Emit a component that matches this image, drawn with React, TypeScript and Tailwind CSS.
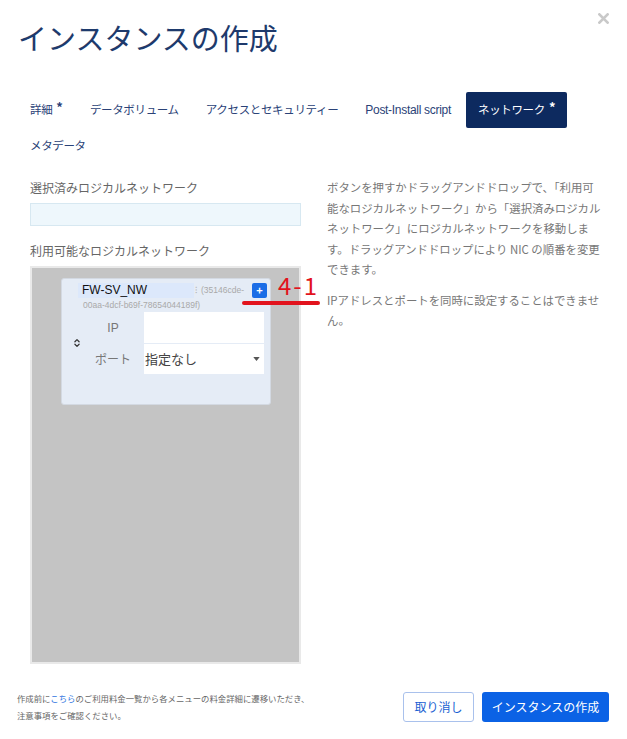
import { ChevronsUpDown } from "lucide-react";

const tabs = [
  { label: "詳細", req: true },
  { label: "データボリューム" },
  { label: "アクセスとセキュリティー" },
  { label: "Post-Install script" },
  { label: "ネットワーク", req: true, active: true },
  { label: "メタデータ" },
];

const help1 = [
  "ボタンを押すかドラッグアンドドロップで、「利用可",
  "能なロジカルネットワーク」から「選択済みロジカル",
  "ネットワーク」にロジカルネットワークを移動しま",
  "す。ドラッグアンドドロップにより NIC の順番を変更",
  "できます。",
];

const help2 = ["IPアドレスとポートを同時に設定することはできませ", "ん。"];

function NetworkCard() {
  return (
    <div className="ml-[29px] mt-[9px] w-[210px] h-[127px] rounded-[3px] border border-[#d3d9e2] bg-[#e5ecf6]">
      <div className="flex items-center h-[18px] mt-[2px]">
        <span className="ml-[16px] w-[116px] h-[15px] pl-[4px] flex items-center bg-[#dce8fb] text-[12px] text-[#111] font-['Liberation_Sans',sans-serif]">
          FW-SV_NW
        </span>
        <span className="ml-[1px] text-[9px] text-[#b0b0b0]">⁝</span>
        <span className="ml-[4px] text-[8.5px] text-[#a9a9a9] font-['Liberation_Sans',sans-serif]">(35146cde-</span>
        <button className="ml-auto mr-[3px] w-[15px] h-[15px] rounded-[2px] bg-[#1b6de6] text-white text-[11px] leading-none flex items-center justify-center font-bold">
          +
        </button>
      </div>
      <div className="ml-[21px] h-[13px] leading-[13px] text-[8.5px] text-[#a9a9a9] font-['Liberation_Sans',sans-serif]">
        00aa-4dcf-b69f-78654044189f)
      </div>
      <div className="flex items-center">
        <div className="w-[29px] flex justify-center pl-[1px]">
          <ChevronsUpDown className="w-[10px] h-[10px] text-[#333]" strokeWidth={3} />
        </div>
        <div className="flex flex-col gap-[1px]">
          <div className="flex items-center">
            <span className="w-[44px] text-center text-[12px] text-[#777] font-['Liberation_Sans',sans-serif]">IP</span>
            <div className="ml-[9px] w-[120px] h-[31px] bg-white" />
          </div>
          <div className="flex items-center">
            <span className="w-[44px] text-center text-[12px] text-[#777]">ポート</span>
            <div className="ml-[9px] w-[120px] h-[30px] bg-white flex items-center justify-between pl-[1px] pr-[4px]">
              <span className="text-[13px] text-[#444]">指定なし</span>
              <svg viewBox="0 0 8 5" className="w-[7px] h-[4px]">
                <path d="M0 0 L8 0 L4 5 Z" fill="#555" />
              </svg>
            </div>
          </div>
        </div>
      </div>
    </div>
  );
}

export default function App() {
  return (
    <div className="w-[627px] h-[739px] bg-white px-[18px] font-['Noto_Sans_CJK_JP',sans-serif] relative">
      <div className="flex items-start justify-between pt-[16px]">
        <h1 className="text-[29px] leading-[42px] text-[#1e3a6c] font-normal">インスタンスの作成</h1>
        <button className="mt-[-3px] w-[11px] h-[11px]">
          <svg viewBox="0 0 12 12" className="w-[11px] h-[11px]">
            <path d="M1.5 1.5 L10.5 10.5 M10.5 1.5 L1.5 10.5" stroke="#c9c9c9" strokeWidth="3" strokeLinecap="round" />
          </svg>
        </button>
      </div>

      <div className="flex flex-wrap gap-x-[3px] mt-[34px]">
        {tabs.map((t) => (
          <div
            key={t.label}
            className={
              t.active
                ? "h-[36px] px-3 flex items-center rounded-[2px] bg-[#0d2a5f] text-white text-[11.5px]"
                : "h-[36px] px-3 flex items-center text-[#2a4277] text-[11.5px]"
            }
          >
            <span className={t.label === "Post-Install script" ? "font-['Liberation_Sans',sans-serif] text-[12px] tracking-[-0.3px]" : "tracking-[-0.35px]"}>
              {t.label}
            </span>
            {t.req && <span className="ml-[4px] mt-[-8px] text-[13px] font-bold leading-none">*</span>}
          </div>
        ))}
      </div>

      <div className="flex px-3 mt-[14px]">
        <div className="w-[271px] shrink-0">
          <div className="h-[20px] leading-[20px] text-[12px] text-[#666]">選択済みロジカルネットワーク</div>
          <div className="mt-[5px] h-[23px] bg-[#eef7fc] border border-[#d7e8f1]" />
          <div className="mt-[15px] h-[20px] leading-[20px] text-[12px] text-[#666]">利用可能なロジカルネットワーク</div>
          <div className="mt-[5px] h-[398px] border-2 border-[#e9e9e9] bg-[#c4c4c4] pt-[1px]">
            <NetworkCard />
          </div>
        </div>

        <div className="ml-[26px] mt-[-1px] text-[11.4px] leading-[20.5px] text-[#777]">
          <p className="mb-[10px]">
            {help1.map((l) => (
              <span key={l} className="block whitespace-nowrap">{l}</span>
            ))}
          </p>
          <p>
            {help2.map((l) => (
              <span key={l} className="block whitespace-nowrap">{l}</span>
            ))}
          </p>
        </div>
      </div>

      <div className="flex items-center justify-between mt-[26px]">
        <div className="ml-[-1px] text-[8.4px] leading-[17px] text-[#666]">
          <div>
            作成前に<span className="text-[#2f74e0]">こちら</span>のご利用料金一覧から各メニューの料金詳細に遷移いただき、
          </div>
          <div>注意事項をご確認ください。</div>
        </div>
        <div className="flex gap-[8px]">
          <button className="w-[71px] h-[30px] rounded-[3px] border border-[#a9c1ec] text-[#1b5fd2] text-[12px]">取り消し</button>
          <button className="w-[127px] h-[30px] rounded-[3px] bg-[#0b62e5] text-white text-[12px]">インスタンスの作成</button>
        </div>
      </div>

      <div className="absolute left-[278px] top-[270px] text-[24px] leading-[30px] tracking-[2px] text-[#e2131d]">
        4-1
      </div>
      <div className="absolute left-[242px] top-[301px] w-[78px] h-[4px] rounded-full bg-[#e2131d]" />
    </div>
  );
}
